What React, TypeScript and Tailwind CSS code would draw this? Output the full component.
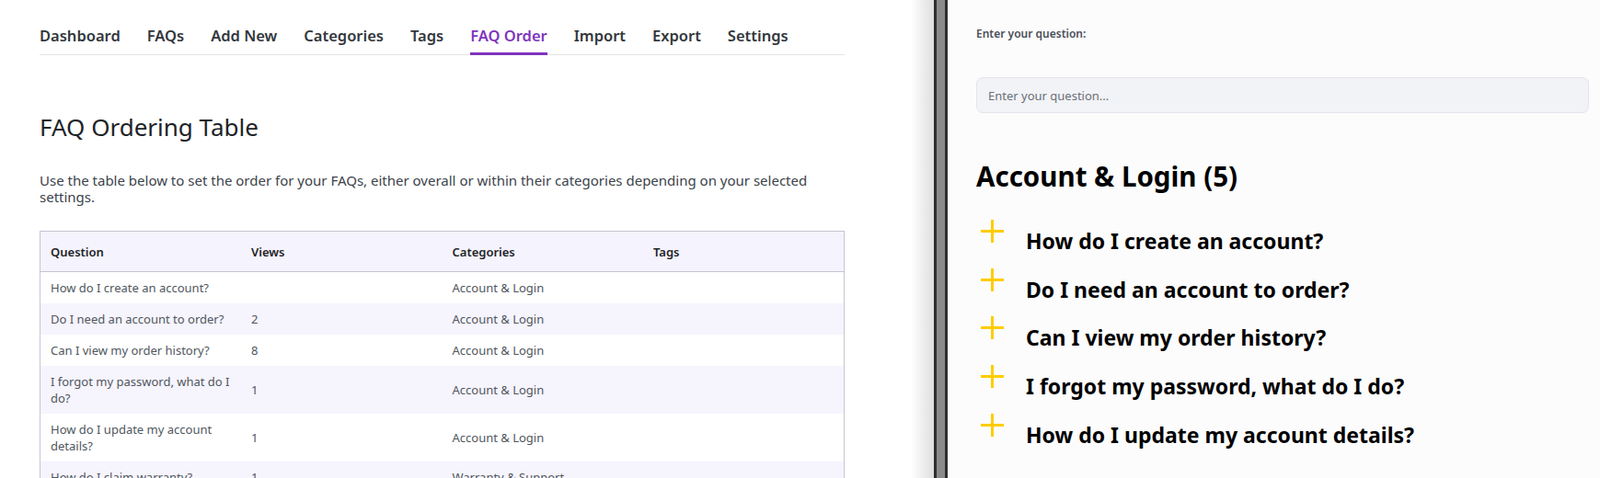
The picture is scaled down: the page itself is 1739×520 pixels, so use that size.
import React from "react";

const navItems = [
  "Dashboard",
  "FAQs",
  "Add New",
  "Categories",
  "Tags",
  "FAQ Order",
  "Import",
  "Export",
  "Settings",
];

const rows = [
  { q: "How do I create an account?", views: "", cat: "Account & Login" },
  { q: "Do I need an account to order?", views: "2", cat: "Account & Login" },
  { q: "Can I view my order history?", views: "8", cat: "Account & Login" },
  { q: "I forgot my password, what do I do?", views: "1", cat: "Account & Login" },
  { q: "How do I update my account details?", views: "1", cat: "Account & Login" },
  { q: "How do I claim warranty?", views: "1", cat: "Warranty & Support" },
];

const questions = [
  "How do I create an account?",
  "Do I need an account to order?",
  "Can I view my order history?",
  "I forgot my password, what do I do?",
  "How do I update my account details?",
];

function PlusIcon() {
  return (
    <svg width="27" height="27" viewBox="0 0 27 27" className="-mt-[2px] shrink-0">
      <path d="M13.5 1v25M1 13.5h25" stroke="#ffcc00" strokeWidth="3" fill="none" />
    </svg>
  );
}

export default function App() {
  return (
    <div className="flex h-[520px] w-[1739px] overflow-hidden font-['Noto_Sans',sans-serif]">
      {/* admin side */}
      <div className="flex w-[1015px] shrink-0 bg-white">
        <div className="w-[990px] shrink-0 pl-[43px]">
          <div className="w-[875px]">
            <nav className="mt-[27px] flex gap-[29px] border-b border-[#e2e4e7]">
              {navItems.map((item) => (
                <a
                  key={item}
                  href="#"
                  className={
                    item === "FAQ Order"
                      ? "-mb-px border-b-[3px] border-[#7f35bd] pb-[6px] text-[16.5px] font-semibold leading-[24px] text-[#7f35bd]"
                      : "-mb-px border-b-[3px] border-transparent pb-[6px] text-[16.5px] font-semibold leading-[24px] text-[#32373c]"
                  }
                >
                  {item}
                </a>
              ))}
            </nav>

            <h1 className="mt-[62px] text-[26px] font-normal leading-[32px] text-[#1d2327]">
              FAQ Ordering Table
            </h1>
            <p className="mt-[33px] text-[15px] leading-[18px] text-[#3c434a]">
              Use the table below to set the order for your FAQs, either overall or within their
              categories depending on your selected settings.
            </p>

            <table className="mt-[28px] w-full table-fixed border-collapse border border-[#c6c4d2] text-[13px] leading-[18px]">
              <thead>
                <tr className="h-[44px] border-b border-[#c6c4d2] bg-[#f5f3fd] text-left">
                  <th className="px-[11px] font-semibold text-[#1d2327]">Question</th>
                  <th className="px-[11px] font-semibold text-[#1d2327]">Views</th>
                  <th className="px-[11px] font-semibold text-[#1d2327]">Categories</th>
                  <th className="px-[11px] font-semibold text-[#1d2327]">Tags</th>
                </tr>
              </thead>
              <tbody>
                {rows.map((r, i) => (
                  <tr key={r.q} className={i % 2 === 1 ? "bg-[#f6f4fd]" : "bg-white"}>
                    <td className="px-[11px] py-[8px] text-[#50575e]">{r.q}</td>
                    <td className="px-[11px] py-[8px] text-[#50575e]">{r.views}</td>
                    <td className="px-[11px] py-[8px] text-[#50575e]">{r.cat}</td>
                    <td className="px-[11px] py-[8px] text-[#50575e]"></td>
                  </tr>
                ))}
              </tbody>
            </table>
          </div>
        </div>
        <div className="w-[25px] shrink-0 bg-gradient-to-r from-white to-[#dedede]" />
      </div>

      {/* frame edge */}
      <div className="w-[3px] shrink-0 bg-[#2e2e2e]" />
      <div className="w-[9px] shrink-0 bg-[#8a8a8a]" />
      <div className="w-[3px] shrink-0 bg-[#2e2e2e]" />

      {/* preview side */}
      <div className="flex-1 bg-[#fcfcfc] pl-[31px] pr-[12px]">
        <label className="mt-[29px] block text-[12px] font-semibold leading-[16px] text-[#4b4f58]">
          Enter your question:
        </label>
        <input
          type="text"
          placeholder="Enter your question..."
          className="mt-[39px] h-[39px] w-full rounded-[7px] border border-[#e3e5ec] bg-[#f2f3f6] px-[12px] text-[13px] text-[#333] placeholder:text-[#6b6f78] outline-none"
        />
        <h2 className="mt-[51px] text-[29.5px] font-bold leading-[36px] text-black">
          Account &amp; Login (5)
        </h2>
        <div className="mt-[30px] flex flex-col">
          {questions.map((q) => (
            <div key={q} className="flex h-[52.7px] items-start pl-[4px]">
              <PlusIcon />
              <span className="ml-[23px] pt-[9px] text-[23px] font-bold leading-[26px] text-black">
                {q}
              </span>
            </div>
          ))}
        </div>
      </div>
    </div>
  );
}
